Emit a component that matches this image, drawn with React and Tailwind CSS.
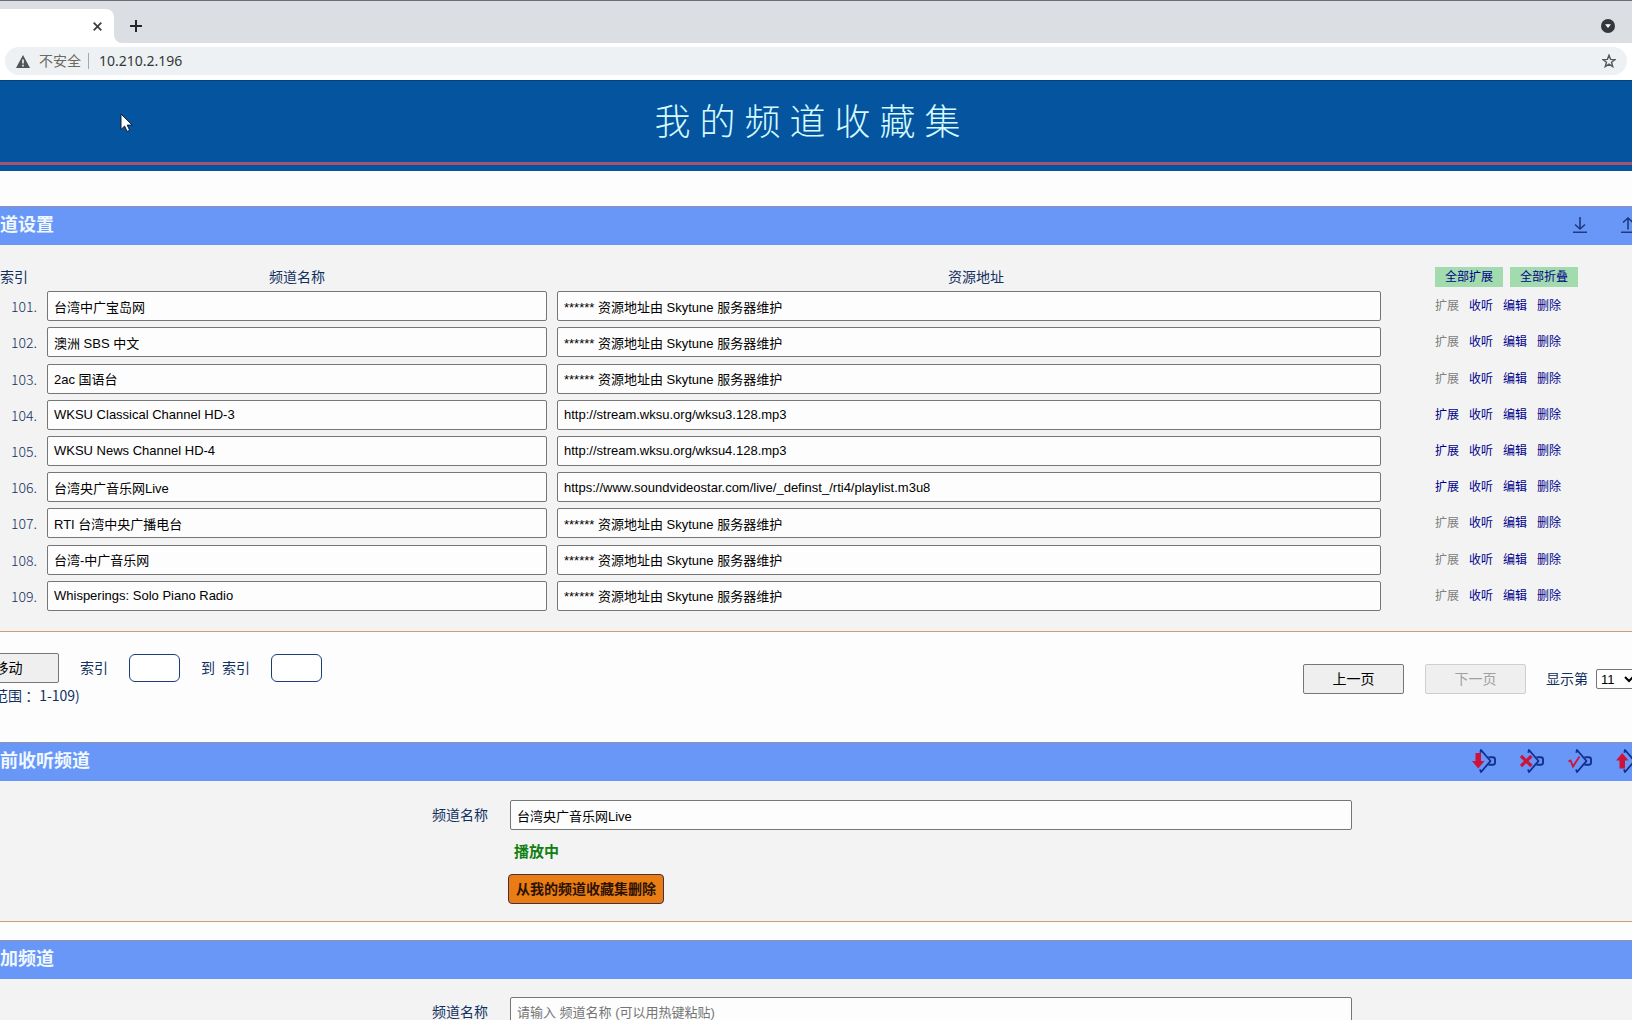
const MASKED = "****** 资源地址由 Skytune 服务器维护";

const channels = [
  { id: 101, name: "台湾中广宝岛网", url: MASKED, canExpand: false },
  { id: 102, name: "澳洲 SBS 中文", url: MASKED, canExpand: false },
  { id: 103, name: "2ac 国语台", url: MASKED, canExpand: false },
  { id: 104, name: "WKSU Classical Channel HD-3", url: "http://stream.wksu.org/wksu3.128.mp3", canExpand: true },
  { id: 105, name: "WKSU News Channel HD-4", url: "http://stream.wksu.org/wksu4.128.mp3", canExpand: true },
  { id: 106, name: "台湾央广音乐网Live", url: "https://www.soundvideostar.com/live/_definst_/rti4/playlist.m3u8", canExpand: true },
  { id: 107, name: "RTI 台湾中央广播电台", url: MASKED, canExpand: false },
  { id: 108, name: "台湾-中广音乐网", url: MASKED, canExpand: false },
  { id: 109, name: "Whisperings: Solo Piano Radio", url: MASKED, canExpand: false },
];

const fieldClass =
  "block w-full h-[30px] rounded-xs border border-[#767676] bg-[#fdfdfd] px-1.5 text-[13px] text-black placeholder:text-[#757575]";

function BrowserBar() {
  return (
    <div className="font-['Noto_Sans','Noto_Sans_CJK_SC',sans-serif]">
      <div className="flex h-[43px] items-end border-t border-[#6b6d75] bg-[#dbdfe3]">
        <div className="flex h-[34px] w-[114px] items-center justify-end rounded-tr-lg bg-white pr-3">
          <button aria-label="关闭标签页">
            <svg width="9" height="9" viewBox="0 0 9 9" stroke="#3c4043" strokeWidth="1.8">
              <path d="M.7.7l7.6 7.6M8.3.7L.7 8.3" />
            </svg>
          </button>
        </div>
        <svg width="8" height="8" viewBox="0 0 8 8" fill="#fff">
          <path d="M0 0a8 8 0 0 0 8 8H0z" />
        </svg>
        <button aria-label="新标签页" className="mb-[11px] ml-2">
          <svg width="12" height="12" viewBox="0 0 12 12" stroke="#24272b" strokeWidth="2">
            <path d="M6 0v12M0 6h12" />
          </svg>
        </button>
        <button aria-label="搜索标签页" className="mr-[17px] mb-2.5 ml-auto">
          <svg width="14" height="14" viewBox="0 0 14 14">
            <circle cx="7" cy="7" r="7" fill="#34383d" />
            <path d="M4 5.2h6L7 9z" fill="#fff" />
          </svg>
        </button>
      </div>
      <div className="bg-white px-[5px] pt-1 pb-[5px]">
        <div className="flex h-7 items-center rounded-full bg-[#edf1f3] px-[11px]">
          <svg width="14" height="13" viewBox="0 0 14 13">
            <path d="M7 0l7 13H0z" fill="#505357" />
            <path d="M7 4.5v4M7 9.8v1.6" stroke="#fff" strokeWidth="1.5" />
          </svg>
          <span className="ml-[9px] text-sm text-[#6b6862]">不安全</span>
          <span className="mr-[10px] ml-[7px] h-4 w-px bg-[#a5a8ab]" />
          <span className="text-sm text-[#34373a]">10.210.2.196</span>
          <button aria-label="收藏" className="ml-auto">
            <svg width="14" height="14" viewBox="0 0 24 24" fill="none" stroke="#55585c" strokeWidth="2.4">
              <path d="M12 2l2.7 7.2 7.6.3-6 4.7 2.1 7.4-6.4-4.2-6.4 4.2 2.1-7.4-6-4.7 7.6-.3z" />
            </svg>
          </button>
        </div>
      </div>
    </div>
  );
}

function SectionBar({ title, children }) {
  return (
    <div className="flex h-[39px] items-center justify-between border-t border-[#9292ad] bg-[#6997f8] pb-0.5">
      <h2 className="text-lg font-bold text-[#f0f8ff]">{title}</h2>
      <div className="-mr-5 flex items-center">{children}</div>
    </div>
  );
}

function TransferIcon({ up }) {
  return (
    <svg width="14" height="16" viewBox="0 0 14 16" fill="none" stroke="#1f3a80" strokeWidth="1.6">
      <path d={up ? "M7 12.5V1M2 5.5L7 1l5 4.5M0 15.2h14" : "M7 0v12M2 7.5L7 12l5-4.5M0 15.2h14"} />
    </svg>
  );
}

const marks = {
  down: <path d="M3.5 4h5.5v8h3.500l-6.250 7.500L0 12h3.500z" fill="#cf1237" />,
  remove: <path d="M1 7l10.500 10M11.500 7L1 17" stroke="#cf1237" strokeWidth="3.200" />,
  check: <path d="M.5 12.500l2-1 2.500 6L11.500 7.500" stroke="#cf1237" strokeWidth="1.800" fill="none" />,
  up: <path d="M3.500 19.500v-8H0L6.250 4l6.250 7.500H9v8z" fill="#cf1237" />,
};

function TagIcon({ mark }) {
  return (
    <svg width="24" height="24" viewBox="0 0 24 24">
      <g fill="none" stroke="#12308f" strokeWidth="1.9" strokeLinejoin="round">
        <path d="M8.300 3.800L9 1l9.500 11L9 23l-1-2.500" />
        <path d="M16.500 8.300h4.300q2.200 0 2.200 2.200v3q0 2.200-2.200 2.200h-4.300" />
      </g>
      {marks[mark]}
    </svg>
  );
}

function IconButton({ label, children }) {
  return (
    <button aria-label={label} className="flex w-12 justify-center">
      {children}
    </button>
  );
}

function ChannelTable() {
  return (
    <table className="h-[348px] w-full table-fixed text-sm">
      <colgroup>
        <col className="w-[47px]" />
        <col className="w-5/16" />
        <col />
        <col className="w-[251px]" />
      </colgroup>
      <thead>
        <tr className="h-[22px]">
          <th className="text-left font-normal">索引</th>
          <th className="pr-2.5 font-normal">频道名称</th>
          <th className="pl-3.5 font-normal">资源地址</th>
          <th className="pl-[54px]">
            <div className="flex gap-[7px] text-xs font-normal text-[#00008b]">
              <button className="h-5 w-[68px] bg-[#a2dbad]">全部扩展</button>
              <button className="h-5 w-[68px] bg-[#a2dbad]">全部折叠</button>
            </div>
          </th>
        </tr>
      </thead>
      <tbody>
        {channels.map((c) => (
          <tr key={c.id} className="h-9">
            <td className="pr-2.5 text-right font-['Noto_Sans_CJK_SC',sans-serif] leading-5 font-light">{c.id}.</td>
            <td className="pr-2.5">
              <input aria-label={`${c.id} 频道名称`} className={fieldClass} defaultValue={c.name} />
            </td>
            <td>
              <input aria-label={`${c.id} 资源地址`} className={fieldClass} defaultValue={c.url} />
            </td>
            <td className="pl-[54px]">
              <div className="flex gap-2.5 text-xs leading-[18px] text-[#00008b]">
                <a href="#expand" className={c.canExpand ? "" : "text-[#808080]"}>扩展</a>
                <a href="#listen">收听</a>
                <a href="#edit">编辑</a>
                <a href="#delete">删除</a>
              </div>
            </td>
          </tr>
        ))}
      </tbody>
    </table>
  );
}

function Pager() {
  const button = "h-[30px] w-[101px] rounded-xs border text-sm";
  const indexInput = "h-7 w-[51px] rounded-md border border-[#1c3d7a] bg-white px-1 text-[13px]";
  return (
    <div className="flex items-start justify-between pt-[21px] pb-[35px] text-sm">
      <div>
        <div className="flex items-center">
          <button className={`${button} -ml-[42px] border-[#767676] bg-[#efefef] text-black`}>移动</button>
          <label htmlFor="from" className="ml-[21px]">索引</label>
          <input id="from" className={`${indexInput} ml-[21px]`} />
          <label htmlFor="to" className="ml-[21px] flex gap-[7px]">
            <span>到</span>
            <span>索引</span>
          </label>
          <input id="to" className={`${indexInput} ml-[21px]`} />
        </div>
        <p className="-ml-1.5 font-['Noto_Sans_CJK_SC',sans-serif] leading-6">范围 ：1-109)</p>
      </div>
      <div className="-mr-1.5 flex shrink-0 items-center pt-[11px]">
        <button className={`${button} border-[#767676] bg-[#efefef] text-black`}>上一页</button>
        <button disabled className={`${button} ml-[21px] border-[#cfcfcf] bg-[#efefef] text-[#a0a0a0]`}>
          下一页
        </button>
        <label htmlFor="page" className="ml-5">显示第</label>
        <select
          id="page"
          defaultValue="11"
          className="ml-2 h-5 w-[42px] rounded-xs border border-[#767676] bg-white text-[13px] text-black"
        >
          <option>10</option>
          <option>11</option>
        </select>
      </div>
    </div>
  );
}

function FormRow({ id, children }) {
  return (
    <div className="flex items-start">
      <label htmlFor={id} className="w-5/16 pr-[22px] text-right text-sm leading-[30px]">频道名称</label>
      <div className="w-[842px] max-w-[60%]">{children}</div>
    </div>
  );
}

function MouseCursor() {
  return (
    <svg className="absolute top-[113px] left-[120px]" width="14" height="20" viewBox="0 0 14 20">
      <path d="M1 1v15.5l3.600-3.400 2.500 5.400 2.600-1.200-2.500-5.200h5z" fill="#fff" stroke="#111c3a" strokeWidth="1" />
    </svg>
  );
}

export default function App() {
  return (
    <div className="relative h-screen overflow-hidden bg-[#fdfdfd] font-['Liberation_Sans','Noto_Sans_CJK_SC',sans-serif] text-[#12305f]">
      <BrowserBar />
      <header className="border-t border-[#0a4377] bg-[#05549f] pb-1.5">
        <h1 className="border-b-3 border-[#a3566b] pt-2.5 pr-2 pb-3.5 text-center font-['Noto_Sans_CJK_SC',sans-serif] text-4xl leading-[57px] font-light tracking-[0.25em] text-[#d5fbff]">
          我的频道收藏集
        </h1>
      </header>

      <main>
        <section className="pt-[35px]">
          <SectionBar title="道设置">
            <IconButton label="下载"><TransferIcon /></IconButton>
            <IconButton label="上传"><TransferIcon up /></IconButton>
          </SectionBar>
          <div className="border-b border-[#cf9f78] bg-[#f3f3f3] pt-[21px] pb-[17px]">
            <ChannelTable />
          </div>
          <Pager />
        </section>

        <section>
          <SectionBar title="前收听频道">
            <IconButton label="下移"><TagIcon mark="down" /></IconButton>
            <IconButton label="移除"><TagIcon mark="remove" /></IconButton>
            <IconButton label="确认"><TagIcon mark="check" /></IconButton>
            <IconButton label="上移"><TagIcon mark="up" /></IconButton>
          </SectionBar>
          <div className="border-b border-[#cf9f78] bg-[#f3f3f3] pt-[19px] pb-[17px]">
            <FormRow id="current">
              <input id="current" className={fieldClass} defaultValue="台湾央广音乐网Live" />
              <p className="py-[11px] pl-1 text-[15px] leading-[22px] font-bold text-[#118011]">播放中</p>
              <button className="-ml-0.5 block h-[30px] rounded border border-[#4a2c46] bg-[#e97c12] px-[7px] text-sm font-bold text-[#2a1206]">
                从我的频道收藏集删除
              </button>
            </FormRow>
          </div>
        </section>

        <section className="pt-[18px]">
          <SectionBar title="加频道" />
          <div className="bg-[#f3f3f3] pt-[18px] pb-10">
            <FormRow id="new">
              <input id="new" className={fieldClass} placeholder="请输入 频道名称 (可以用热键粘贴)" />
            </FormRow>
          </div>
        </section>
      </main>
      <MouseCursor />
    </div>
  );
}
